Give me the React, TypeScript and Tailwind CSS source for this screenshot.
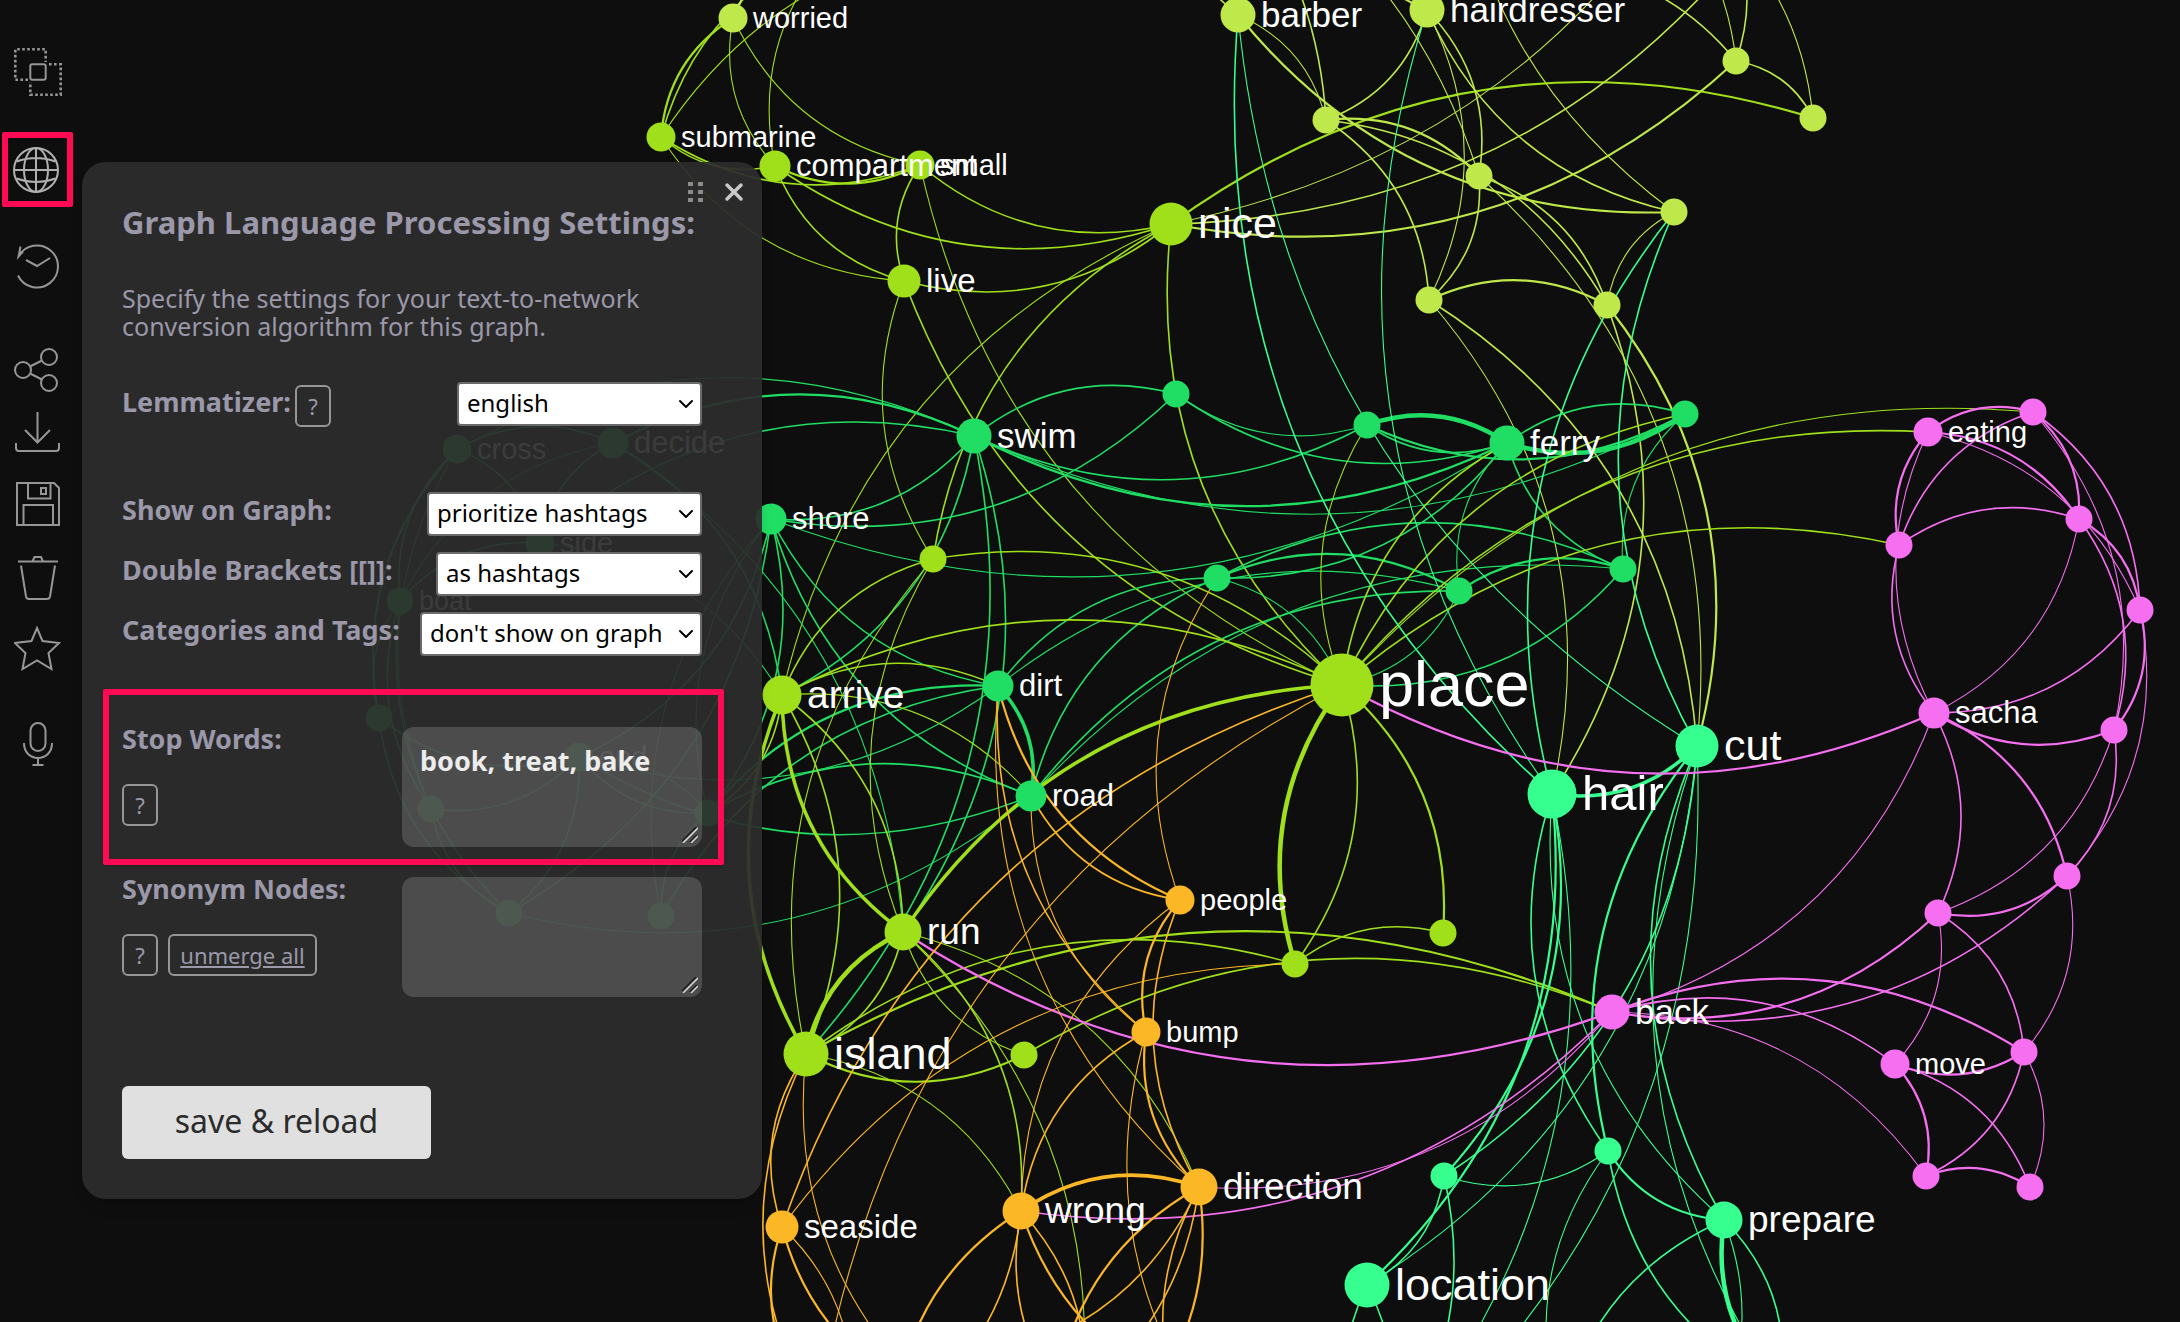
import { useState, type ReactNode } from "react";
import { ChevronDown, X } from "lucide-react";

const LIME = "#a0e01b";
const PALE = "#bfe84a";
const GREEN = "#20de64";
const MINT = "#37ff8f";
const PINK = "#f56ff0";
const AMBER = "#fbb725";

type GraphNode = { x: number; y: number; r: number; color: string; label?: string };
type Edge = [from: string, to: string, weight: number];

const n = (x: number, y: number, r: number, color: string, label?: string): GraphNode => ({ x, y, r, color, label });

const nodes: Record<string, GraphNode> = {
    worried: n(733, 18, 14, PALE, "worried"),
    submarine: n(661, 137, 14, LIME, "submarine"),
    compartment: n(775, 166, 15, LIME, "compartment"),
    small: n(920, 165, 14, LIME, "small"),
    nice: n(1171, 224, 21, LIME, "nice"),
    live: n(904, 281, 16, LIME, "live"),
    barber: n(1238, 15, 17, PALE, "barber"),
    hairdresser: n(1427, 10, 17, PALE, "hairdresser"),
    n1: n(1326, 120, 13, PALE),
    h2: n(1736, 61, 13, PALE),
    h3: n(1813, 118, 13, PALE),
    h4: n(1479, 176, 13, PALE),
    h5: n(1674, 212, 13, PALE),
    h6: n(1429, 300, 13, PALE),
    h7: n(1607, 305, 13, PALE),
    swim: n(974, 436, 17, GREEN, "swim"),
    ferry: n(1507, 443, 17, GREEN, "ferry"),
    shore: n(771, 519, 15, GREEN, "shore"),
    dirt: n(998, 686, 15, GREEN, "dirt"),
    road: n(1031, 796, 15, GREEN, "road"),
    g1: n(1176, 394, 13, GREEN),
    g2: n(1367, 425, 13, GREEN),
    g3: n(1685, 414, 13, GREEN),
    g4: n(1217, 578, 13, GREEN),
    g5: n(1459, 591, 13, GREEN),
    g6: n(1623, 569, 13, GREEN),
    y1: n(933, 559, 13, LIME),
    arrive: n(782, 695, 19, LIME, "arrive"),
    place: n(1342, 685, 31, LIME, "place"),
    run: n(903, 932, 18, LIME, "run"),
    island: n(806, 1054, 22, LIME, "island"),
    y2: n(1024, 1055, 13, LIME),
    y3: n(1295, 964, 13, LIME),
    y4: n(1443, 933, 13, LIME),
    hair: n(1552, 794, 24, MINT, "hair"),
    cut: n(1697, 746, 21, MINT, "cut"),
    t1: n(1608, 1151, 13, MINT),
    t2: n(1444, 1176, 13, MINT),
    prepare: n(1724, 1220, 18, MINT, "prepare"),
    location: n(1367, 1285, 22, MINT, "location"),
    eating: n(1928, 432, 14, PINK, "eating"),
    sacha: n(1934, 713, 15, PINK, "sacha"),
    back: n(1612, 1012, 17, PINK, "back"),
    move: n(1895, 1064, 14, PINK, "move"),
    p1: n(2033, 412, 13, PINK),
    p2: n(2079, 519, 13, PINK),
    p3: n(1899, 545, 13, PINK),
    p4: n(2140, 610, 13, PINK),
    p5: n(2114, 730, 13, PINK),
    p6: n(2067, 876, 13, PINK),
    p7: n(1938, 913, 13, PINK),
    p8: n(2024, 1052, 13, PINK),
    p9: n(1926, 1176, 13, PINK),
    p10: n(2030, 1187, 13, PINK),
    people: n(1180, 900, 14, AMBER, "people"),
    bump: n(1146, 1032, 14, AMBER, "bump"),
    direction: n(1199, 1187, 18, AMBER, "direction"),
    wrong: n(1021, 1211, 18, AMBER, "wrong"),
    seaside: n(782, 1227, 16, AMBER, "seaside"),
    cross: n(457, 449, 14, GREEN, "cross"),
    decide: n(613, 443, 15, GREEN, "decide"),
    side: n(540, 543, 14, GREEN, "side"),
    boat: n(400, 601, 13, GREEN, "boat"),
    end: n(579, 757, 14, GREEN, "end"),
    d1: n(379, 718, 13, GREEN),
    d2: n(431, 809, 13, GREEN),
    d3: n(708, 813, 13, GREEN),
    d4: n(509, 913, 13, GREEN),
    d5: n(661, 916, 13, GREEN),
    // nodes outside the visible part of the graph
    u1: n(1006, -63, 13, PALE),
    u2: n(835, -56, 13, PALE),
    u3: n(860, -90, 13, PALE),
    u4: n(1141, -200, 13, PALE),
    u5: n(1132, -184, 13, PALE),
    u6: n(1452, -224, 13, PALE),
    u7: n(1780, -100, 13, PALE),
    u8: n(1739, -218, 13, PALE),
    u9: n(1715, -100, 13, PALE),
    u10: n(1526, -33, 13, PALE),
    u11: n(1600, -149, 13, PALE),
    u12: n(1667, -115, 13, PALE),
    u13: n(1340, -90, 13, PALE),
    b1: n(820, 1400, 13, AMBER),
    b2: n(935, 1400, 13, AMBER),
    b3: n(805, 1395, 13, AMBER),
    b4: n(1225, 1440, 13, AMBER),
    b5: n(895, 1420, 13, AMBER),
    b6: n(880, 1430, 13, AMBER),
    b7: n(1080, 1420, 13, AMBER),
    b8: n(1210, 1400, 13, AMBER),
    b9: n(1190, 1440, 13, AMBER),
    b10: n(1055, 1400, 13, AMBER),
    b11: n(980, 1360, 13, AMBER),
    b12: n(1040, 1420, 13, AMBER),
    b13: n(1120, 1430, 13, AMBER),
    b14: n(850, 1420, 13, AMBER),
    m1: n(1560, 1420, 13, MINT),
    m2: n(1780, 1390, 13, MINT),
    m3: n(1370, 1480, 13, MINT),
    m4: n(1700, 1450, 13, MINT),
};

const edges: Edge[] = [
    ["submarine", "u1", 1], ["compartment", "u2", 1], ["submarine", "worried", 3], ["submarine", "u2", 2],
    ["worried", "u3", 3], ["compartment", "worried", 1], ["small", "worried", 1], ["compartment", "submarine", 2],
    ["small", "submarine", 2], ["small", "compartment", 3], ["live", "submarine", 1], ["live", "compartment", 2],
    ["nice", "compartment", 2], ["nice", "small", 2], ["nice", "live", 2], ["live", "small", 2],
    ["arrive", "nice", 1], ["y1", "nice", 2], ["place", "live", 2], ["place", "small", 1],
    ["y1", "live", 1], ["place", "nice", 2], ["nice", "h3", 3],

    ["h5", "barber", 3], ["barber", "n1", 1], ["u4", "n1", 2], ["hairdresser", "n1", 2], ["n1", "h4", 3],
    ["n1", "h7", 2], ["h4", "h7", 2], ["h4", "cut", 1], ["n1", "h6", 2], ["hairdresser", "h4", 2],
    ["hairdresser", "h6", 1], ["h5", "hairdresser", 2], ["h4", "h6", 2], ["h6", "h7", 3], ["h7", "h5", 1],
    ["h5", "u6", 1], ["u7", "nice", 2], ["u8", "nice", 1], ["h2", "nice", 3], ["u5", "h4", 1],
    ["u10", "h2", 2], ["u11", "h2", 1], ["u9", "h2", 2], ["h2", "h3", 2], ["u12", "h3", 1],
    ["barber", "u4", 2], ["barber", "u13", 3], ["hairdresser", "u13", 3], ["h7", "cut", 3], ["h6", "cut", 2],
    ["h6", "hair", 1], ["h7", "hair", 2],

    ["swim", "g1", 2], ["g1", "shore", 2], ["g2", "g1", 1], ["ferry", "g1", 2], ["g2", "swim", 2],
    ["ferry", "swim", 3], ["g3", "swim", 1], ["ferry", "shore", 1], ["swim", "shore", 2], ["cross", "swim", 1],
    ["decide", "swim", 3], ["side", "swim", 2], ["swim", "arrive", 2], ["swim", "island", 2], ["swim", "run", 2],
    ["decide", "arrive", 2], ["decide", "run", 1], ["side", "arrive", 1], ["dirt", "shore", 2], ["road", "shore", 2],
    ["d3", "shore", 1], ["shore", "end", 2], ["shore", "d4", 2], ["shore", "d3", 2], ["d5", "shore", 1],
    ["side", "decide", 2], ["cross", "side", 2], ["cross", "decide", 2], ["boat", "cross", 2], ["d1", "cross", 3],
    ["d1", "boat", 1], ["d2", "boat", 2], ["d2", "cross", 1], ["boat", "side", 2], ["boat", "decide", 1],
    ["end", "d1", 2], ["end", "d2", 2], ["d4", "d1", 2], ["d4", "boat", 2], ["d4", "d2", 2],
    ["end", "d4", 2], ["d3", "end", 2], ["road", "end", 2], ["d3", "road", 2], ["d3", "dirt", 3],
    ["d5", "dirt", 2], ["dirt", "end", 1], ["d5", "d3", 2], ["end", "d3", 1], ["road", "d4", 1],
    ["dirt", "road", 4], ["dirt", "g4", 2], ["ferry", "g4", 2], ["g4", "g6", 2], ["g4", "g5", 3],
    ["dirt", "g5", 1], ["road", "g4", 2], ["road", "g5", 2], ["road", "g6", 1], ["g4", "place", 1],
    ["g5", "place", 1], ["g6", "place", 2], ["g6", "ferry", 2], ["g5", "ferry", 1], ["g6", "g3", 1],
    ["g5", "g6", 3], ["ferry", "g3", 2], ["g3", "ferry", 5], ["g3", "g2", 3], ["g2", "ferry", 5],
    ["ferry", "g2", 2],

    ["run", "y1", 1], ["island", "y1", 1], ["arrive", "y1", 2], ["y1", "place", 2], ["arrive", "place", 2],
    ["arrive", "dirt", 2], ["arrive", "road", 1], ["run", "arrive", 4], ["island", "arrive", 4],
    ["arrive", "island", 2], ["arrive", "run", 2], ["arrive", "d3", 2], ["run", "place", 4], ["place", "g2", 1],
    ["place", "ferry", 2], ["place", "g3", 2], ["place", "p1", 1], ["place", "eating", 2], ["place", "p3", 2],
    ["y3", "place", 5], ["place", "y3", 2], ["place", "y4", 3], ["y3", "y4", 2], ["island", "y3", 2],
    ["island", "back", 3], ["y2", "back", 2], ["y2", "island", 3], ["y2", "run", 1], ["run", "wrong", 2],
    ["run", "direction", 1], ["run", "b7", 1], ["island", "run", 5], ["run", "island", 2], ["island", "wrong", 1],

    ["hair", "barber", 2], ["cut", "barber", 1], ["hair", "hairdresser", 1], ["hair", "h5", 2], ["cut", "h5", 2],
    ["cut", "hair", 4], ["t1", "hair", 2], ["hair", "t2", 3], ["hair", "location", 3], ["hair", "m3", 1],
    ["prepare", "hair", 1], ["cut", "t2", 2], ["t1", "cut", 3], ["cut", "location", 1], ["prepare", "cut", 2],
    ["m2", "cut", 1], ["cut", "m3", 1], ["t1", "t2", 1], ["prepare", "t1", 3], ["m1", "t1", 1],
    ["m2", "t1", 2], ["m1", "prepare", 2], ["prepare", "m4", 1], ["m2", "prepare", 5], ["prepare", "m2", 2],
    ["t2", "location", 2], ["t2", "m3", 2], ["location", "m3", 2], ["m3", "location", 2],

    ["eating", "p1", 3], ["p1", "p2", 3], ["p1", "p4", 2], ["p1", "p5", 1], ["eating", "p2", 3],
    ["eating", "p4", 1], ["p3", "eating", 3], ["p3", "p1", 2], ["p3", "p2", 2], ["sacha", "p3", 2],
    ["sacha", "eating", 1], ["p2", "sacha", 1], ["p2", "p4", 3], ["p2", "p5", 2], ["p4", "p5", 3],
    ["p4", "sacha", 2], ["p5", "sacha", 3], ["sacha", "p6", 3], ["sacha", "p7", 2], ["sacha", "back", 1],
    ["p4", "p6", 1], ["p5", "p6", 2], ["p5", "p7", 1], ["p6", "p7", 3], ["p6", "back", 2],
    ["p7", "back", 3], ["p7", "p8", 2], ["p7", "move", 1], ["p6", "p8", 1], ["back", "p8", 3],
    ["back", "move", 2], ["back", "p9", 1], ["move", "p9", 3], ["move", "p10", 2], ["p8", "move", 3],
    ["p8", "p9", 2], ["p8", "p10", 1], ["p9", "p10", 3], ["sacha", "place", 3], ["back", "run", 3],
    ["back", "direction", 1], ["back", "wrong", 2],

    ["people", "dirt", 3], ["people", "road", 2], ["bump", "dirt", 2], ["bump", "road", 1],
    ["direction", "dirt", 1], ["people", "g4", 1], ["seaside", "place", 2], ["b1", "place", 1],
    ["seaside", "y3", 1], ["bump", "people", 3], ["direction", "people", 2], ["direction", "bump", 3],
    ["wrong", "bump", 2], ["wrong", "people", 1], ["wrong", "direction", 4], ["b4", "bump", 1],
    ["seaside", "island", 2], ["b2", "island", 1], ["b3", "island", 2], ["b3", "seaside", 3],
    ["b2", "seaside", 3], ["seaside", "b14", 1], ["b5", "wrong", 3], ["wrong", "b6", 2], ["b7", "wrong", 2],
    ["b8", "wrong", 3], ["wrong", "b7", 2], ["b10", "direction", 3], ["direction", "b11", 2],
    ["b9", "direction", 2], ["direction", "b12", 2], ["direction", "b13", 3],
];

const strokeWidths = [0, 1.1, 1.6, 2.2, 3.5, 4.5];

// Quadratic curve, bent to the left of its direction by a quarter of its length
function edgePath(a: GraphNode, b: GraphNode) {
    const cx = (a.x + b.x) / 2 + (b.y - a.y) / 4;
    const cy = (a.y + b.y) / 2 + (a.x - b.x) / 4;
    return `M${a.x} ${a.y}Q${cx} ${cy} ${b.x} ${b.y}`;
}

function Graph() {
    const all = Object.entries(nodes);
    return (
        <svg
            className="absolute inset-0 h-full w-full"
            viewBox="0 0 2180 1322"
            preserveAspectRatio="xMinYMin slice"
            aria-label="Text network"
        >
            {edges.map(([from, to, weight]) => (
                <path
                    key={`${from}-${to}`}
                    d={edgePath(nodes[from], nodes[to])}
                    fill="none"
                    stroke={nodes[from].color}
                    strokeWidth={strokeWidths[weight]}
                />
            ))}
            {all.map(([id, { x, y, r, color }]) => (
                <circle key={id} cx={x} cy={y} r={r + 0.5} fill={color} />
            ))}
            {all.filter(([, node]) => node.label).map(([id, { x, y, r, label }]) => (
                <text
                    key={id}
                    x={x + r + 6}
                    y={Math.round(y + (r * 2 + 1) / 3)}
                    fontSize={r * 2 + 1}
                    fill="#fff"
                    className="font-['Liberation_Sans',Arial,sans-serif]"
                >
                    {label}
                </text>
            ))}
        </svg>
    );
}

function ToolButton({ label, className = "", children }: { label: string; className?: string; children: ReactNode }) {
    return (
        <button type="button" aria-label={label} className={`flex shrink-0 items-center justify-center ${className}`}>
            <svg className="h-12 w-12 shrink-0" viewBox="0 0 48 48" fill="none" stroke="currentColor" strokeWidth="2">
                {children}
            </svg>
        </button>
    );
}

function Toolbar() {
    return (
        <nav className="flex w-[76px] shrink-0 flex-col items-center pt-12 text-[#969696]">
            <ToolButton label="Select">
                <g strokeWidth="2.6" strokeDasharray="2.6 2.4">
                    <path d="M14 31.7H1.3V1.3h30.4V14" />
                    <path d="M35 16.3h11.7v30.4H16.3V34" />
                </g>
                <rect x="16.3" y="16.3" width="15.4" height="15.4" rx="2" />
            </ToolButton>
            <ToolButton
                label="Language settings"
                className="mt-9 mr-0.5 h-[75px] w-[71px] rounded-xs border-6 border-[#ff0a54] text-[#b0b0b0]"
            >
                <circle cx="23" cy="24" r="22" />
                <ellipse cx="23" cy="24" rx="12" ry="22" />
                <path d="M23 2v44M1 24h44M3.5 15.5Q13 12 23 12t19.500 3.500M3.500 32.500Q13 36 23 36t19.500-3.500" />
            </ToolButton>
            <ToolButton label="History" className="mt-[35px]">
                <path d="M4 33.500A21 21 0 1 0 4.500 14.500M6.500 4.500 4.500 14.500 9 9.500M12 18l11 6 13-8" />
            </ToolButton>
            <ToolButton label="Share" className="mt-14">
                <circle cx="9" cy="24" r="8" />
                <circle cx="35" cy="11" r="8" />
                <circle cx="35" cy="37" r="8" />
                <path d="m16 20.500 12-6M16 27.500l12 6" />
            </ToolButton>
            <ToolButton label="Download" className="mt-[14px]">
                <path d="M23.500 4v30M11 22l12.500 12.500L36 22M2 35v5q0 3 3 3h37q3 0 3-3v-5" />
            </ToolButton>
            <ToolButton label="Save" className="mt-6">
                <path d="M3 3h37l5 5v37H3zM14 3v15.500h22.500V3M9.500 45V25h29.500v20" />
                <rect x="27" y="8" width="5" height="6" />
            </ToolButton>
            <ToolButton label="Delete" className="mt-7">
                <path d="M4 5.500h40M18.500 5.500l2-4.500h6.500l2 4.500M7 9.500l5 31q.5 2.500 3 2.500h18q2.500 0 3-2.500l5-31" />
            </ToolButton>
            <ToolButton label="Favourite" className="mt-[21px]">
                <path d="m23 3 5.500 13L45 18 34.500 28l3 16L23 35.500 8.500 44l3-16L1 18l16.500-2z" />
            </ToolButton>
            <ToolButton label="Dictate" className="mt-[47px]">
                <rect x="16.500" y="3" width="15" height="28" rx="7.500" />
                <path d="M10 23c0 20 28 20 28 0M24 38.500V45M18.500 45h11" />
            </ToolButton>
        </nav>
    );
}

function SelectRow({ id, label, value, width, help, className }: {
    id: string;
    label: string;
    value: string;
    width: string;
    help?: boolean;
    className: string;
}) {
    return (
        <div className={`flex h-11 items-start justify-between ${className}`}>
            <div className="flex gap-1">
                <label htmlFor={id} className={`text-[27px] font-bold whitespace-nowrap ${help ? "leading-10" : "leading-9"}`}>
                    {label}
                </label>
                {help && <HelpButton className="mt-[3px]" />}
            </div>
            <div className={`relative ${width}`}>
                <select
                    id={id}
                    className="h-11 w-full appearance-none rounded-sm border-2 border-[#6b6b6b] bg-white pb-0.5 pl-2 text-2xl leading-8 text-black"
                >
                    <option>{value}</option>
                </select>
                <ChevronDown className="pointer-events-none absolute top-2.5 right-0.5 h-6 w-7 text-black" />
            </div>
        </div>
    );
}

function HelpButton({ className = "" }: { className?: string }) {
    return (
        <button
            type="button"
            aria-label="Help"
            className={`h-[42px] w-9 shrink-0 rounded-md border-2 border-[#969696] text-[22px] ${className}`}
        >
            ?
        </button>
    );
}

function WordsField({ id, value, onChange }: { id: string; value: string; onChange: (value: string) => void }) {
    return (
        <div className="relative">
            <textarea
                id={id}
                className="block h-[120px] w-[300px] resize-none rounded-xl bg-white/16 px-[18px] py-4 text-[27px] leading-9 font-bold text-[#ededed] outline-none"
                value={value}
                onChange={(e) => onChange(e.target.value)}
            />
            <svg className="pointer-events-none absolute right-1 bottom-1 h-4 w-4" viewBox="0 0 16 16" fill="none" strokeWidth="1.5">
                <path d="M0 14 14 0M8 15l7-7" stroke="#1c1c1c" />
                <path d="M1 16 16 1M9 16l7-7" stroke="#dcdcdc" />
            </svg>
        </div>
    );
}

function SettingsPanel() {
    const [stopWords, setStopWords] = useState("book, treat, bake");
    const [synonyms, setSynonyms] = useState("");

    return (
        <form className="mt-[162px] ml-1.5 w-[680px] shrink-0 rounded-3xl bg-[#2c2c2c]/93 pr-15 pb-10 pl-10 text-[#9b98a9] shadow-lg">
            <div className="-mr-[46px] flex items-center justify-end gap-4 pt-4">
                <svg className="h-5 w-4" viewBox="0 0 16 20" fill="#8c8c8c" aria-hidden="true">
                    <path d="M0 0h5v4H0zM10 0h5v4h-5zM0 8h5v4H0zM10 8h5v4h-5zM0 16h5v4H0zM10 16h5v4h-5z" />
                </svg>
                <button type="button" aria-label="Close" className="text-[#c8c8c8]">
                    <X className="h-7 w-7" strokeWidth={3} />
                </button>
            </div>
            <h1 className="text-[31px] leading-8 font-bold whitespace-nowrap">Graph Language Processing Settings:</h1>
            <p className="mt-[46px] text-[25px] leading-7 whitespace-nowrap">
                Specify the settings for your text-to-network<br />conversion algorithm for this graph.
            </p>

            <SelectRow id="lemmatizer" label="Lemmatizer:" value="english" width="w-[245px]" help className="mt-[42px]" />
            <SelectRow id="show" label="Show on Graph:" value="prioritize hashtags" width="w-[275px]" className="mt-[66px]" />
            <SelectRow id="brackets" label="Double Brackets [[]]:" value="as hashtags" width="w-[266px]" className="mt-4" />
            <SelectRow id="tags" label="Categories and Tags:" value="don't show on graph" width="w-[282px]" className="mt-4" />

            <div className="mt-[33px] -mr-[22px] -ml-[19px] flex items-start justify-between rounded-xs border-6 border-[#ff0a54] pt-8 pr-4 pb-3 pl-[13px] shadow">
                <div>
                    <label htmlFor="stop-words" className="block text-[27px] leading-6 font-bold">Stop Words:</label>
                    <HelpButton className="mt-[33px]" />
                </div>
                <WordsField id="stop-words" value={stopWords} onChange={setStopWords} />
            </div>

            <div className="mt-3 flex items-start justify-between">
                <div>
                    <label htmlFor="synonyms" className="block text-[27px] leading-6 font-bold">Synonym Nodes:</label>
                    <div className="mt-[33px] flex gap-2.5">
                        <HelpButton />
                        <button type="button" className="h-[42px] w-[149px] rounded-md border-2 border-[#969696] text-[22px] underline">
                            unmerge all
                        </button>
                    </div>
                </div>
                <WordsField id="synonyms" value={synonyms} onChange={setSynonyms} />
            </div>

            <button type="submit" className="mt-[89px] h-[73px] w-[309px] rounded-md bg-[#e0e0e0] pb-1 text-[32px] text-[#2b2b2b]">
                save &amp; reload
            </button>
        </form>
    );
}

export default function App() {
    return (
        <main className="relative min-h-screen overflow-hidden bg-[#0e0e0e] font-['Noto_Sans',sans-serif]">
            <Graph />
            <div className="relative flex items-start">
                <Toolbar />
                <SettingsPanel />
            </div>
        </main>
    );
}
